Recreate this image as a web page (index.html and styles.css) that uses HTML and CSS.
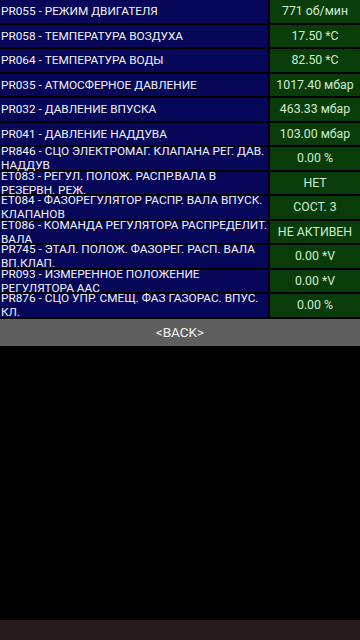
FILE: index.html
```html
<!DOCTYPE html>
<html>
<head>
<meta charset="utf-8">
<link rel="stylesheet" href="styles.css">
</head>
<body>
<div class="screen">
  <div class="table">
    <div class="name"><span>PR055 - РЕЖИМ ДВИГАТЕЛЯ</span></div><div class="val">771 об/мин</div>
    <div class="name"><span>PR058 - ТЕМПЕРАТУРА ВОЗДУХА</span></div><div class="val">17.50 *C</div>
    <div class="name"><span>PR064 - ТЕМПЕРАТУРА ВОДЫ</span></div><div class="val">82.50 *C</div>
    <div class="name"><span>PR035 - АТМОСФЕРНОЕ ДАВЛЕНИЕ</span></div><div class="val">1017.40 мбар</div>
    <div class="name"><span>PR032 - ДАВЛЕНИЕ ВПУСКА</span></div><div class="val">463.33 мбар</div>
    <div class="name"><span>PR041 - ДАВЛЕНИЕ НАДДУВА</span></div><div class="val">103.00 мбар</div>
    <div class="name"><span>PR846 - СЦО ЭЛЕКТРОМАГ. КЛАПАНА РЕГ. ДАВ. НАДДУВ</span></div><div class="val">0.00 %</div>
    <div class="name"><span>ET083 - РЕГУЛ. ПОЛОЖ. РАСПР.ВАЛА В РЕЗЕРВН. РЕЖ.</span></div><div class="val">НЕТ</div>
    <div class="name"><span>ET084 - ФАЗОРЕГУЛЯТОР РАСПР. ВАЛА ВПУСК. КЛАПАНОВ</span></div><div class="val">СОСТ. 3</div>
    <div class="name"><span>ET086 - КОМАНДА РЕГУЛЯТОРА РАСПРЕДЕЛИТ. ВАЛА</span></div><div class="val">НЕ АКТИВЕН</div>
    <div class="name"><span>PR745 - ЭТАЛ. ПОЛОЖ. ФАЗОРЕГ. РАСП. ВАЛА ВП.КЛАП.</span></div><div class="val">0.00 *V</div>
    <div class="name"><span>PR093 - ИЗМЕРЕННОЕ ПОЛОЖЕНИЕ РЕГУЛЯТОРА ААС</span></div><div class="val">0.00 *V</div>
    <div class="name"><span>PR876 - СЦО УПР. СМЕЩ. ФАЗ ГАЗОРАС. ВПУС. КЛ.</span></div><div class="val">0.00 %</div>
  </div>
  <div class="back">&lt;BACK&gt;</div>
  <div class="spacer"></div>
  <div class="navbar"></div>
</div>
</body>
</html>
```
FILE: styles.css
```css
html, body {
  margin: 0;
  padding: 0;
  background: #000;
}
.screen {
  width: 360px;
  height: 640px;
  display: flex;
  flex-direction: column;
  font-family: Roboto, "Noto Sans", sans-serif;
  overflow: hidden;
}
.table {
  display: grid;
  grid-template-columns: 268px 90px;
  grid-auto-rows: 22.5px;
  column-gap: 2px;
  row-gap: 2px;
}
.name {
  background: #060758;
  color: #f2f2f2;
  font-size: 11.8px;
  line-height: 14px;
  display: flex;
  align-items: center;
  padding-left: 1px;
}
.val {
  background: #083d0a;
  color: #cdeccd;
  font-size: 12.3px;
  display: flex;
  align-items: center;
  justify-content: center;
}
.back {
  margin-top: 2px;
  height: 27px;
  background: #5f5f5f;
  color: #f0f0f0;
  font-size: 13.5px;
  display: flex;
  align-items: center;
  justify-content: center;
}
.spacer {
  flex: 1;
}
.navbar {
  height: 20px;
  background: #281b1b;
}
```
